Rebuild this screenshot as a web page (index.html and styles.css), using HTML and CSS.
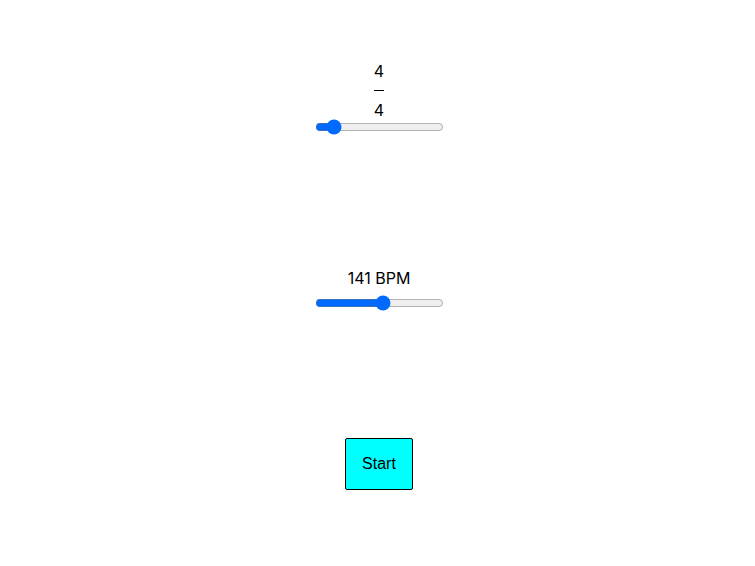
FILE: index.html
```html
<!DOCTYPE html>
<html lang="en">
<head>
	<meta charset="UTF-8">
	<title>Metronome</title>
	<link rel="stylesheet" href="styles.css">
</head>
<body>
	<div class="metronome">
		<div class="control meter">
			<label class="signature" for="beats"><span>4</span><span class="bar"></span><span>4</span></label>
			<input class="slider" id="beats" type="range" min="1" max="30" value="4">
		</div>
		<div class="control">
			<label class="tempo" for="bpm">141 BPM</label>
			<input class="slider" id="bpm" type="range" min="40" max="230" value="141">
		</div>
		<div class="control">
			<button class="start" type="button">Start</button>
		</div>
	</div>
</body>
</html>
```

FILE: styles.css
```css
body{margin:0;background-color:#fff;color:#000;font:16px/18px Inter,sans-serif;}
.metronome{display:flex;flex-direction:column;justify-content:space-between;box-sizing:border-box;min-height:100vh;padding:62px 0 76px 3px;}
.control{display:flex;flex-direction:column;align-items:center;}
.meter{padding-bottom:7px;}

.signature{display:flex;flex-direction:column;align-items:center;}
.bar{align-self:stretch;height:1px;margin:10px 0;background-color:#000;}
.slider{width:129px;height:16px;margin:0;accent-color:#006aff;}
.tempo{margin-bottom:8px;}

.start{min-width:68px;padding:16px;border:1px solid #000;border-radius:2px;background-color:#0ff;color:#000;font:16px/18px "Liberation Sans",Arial,sans-serif;}
```
